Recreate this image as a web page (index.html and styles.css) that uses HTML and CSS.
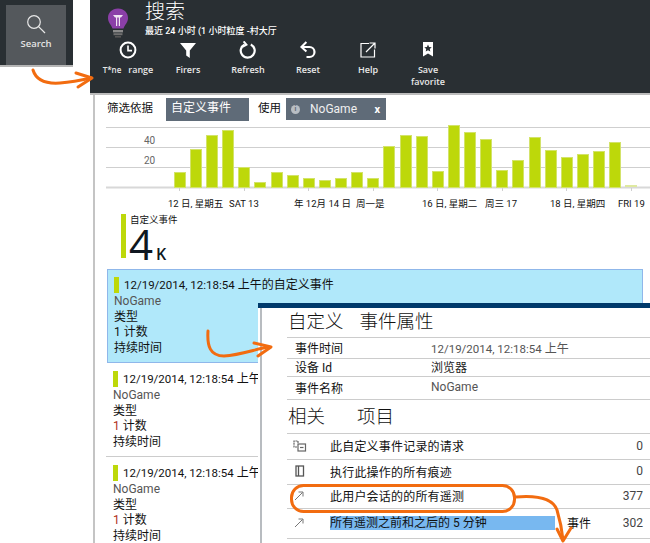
FILE: index.html
```html
<!DOCTYPE html>
<html lang="en">
  <head>
    <meta charset="UTF-8" />
    <meta name="viewport" content="width=device-width, initial-scale=1.0" />
    <title>搜索</title>
    <link rel="stylesheet" href="styles.css">
  </head>
  <body>
    <div class="page">
      <div class="side">
        <div class="search-tile">
          <svg width="20" height="20" viewBox="0 0 20 20" fill="none" stroke="#e8e8e8" stroke-width="1.2">
            <circle cx="8" cy="8" r="6.3" />
            <path d="M12.6 12.6 L19 19" />
          </svg>
          <span>Search</span>
        </div>
      </div>

      <div class="main">
        <header class="blade-header">
          <div class="blade-title">
            <svg class="bulb" width="22" height="30" viewBox="0 0 22 30">
              <path d="M11 0.5 C5 0.5 1 4.8 1 10 C1 14.5 4 16.5 5.5 20.5 L16.5 20.5 C18 16.5 21 14.5 21 10 C21 4.8 17 0.5 11 0.5 Z" fill="#8b3fa8" />
              <path d="M6 7 H16 L14 9.5 H13 V18 H11.8 V9.5 H10.2 V18 H9 V9.5 H8 Z" fill="#f0e4f3" />
              <rect x="6" y="22" width="10" height="2.4" fill="#8a8a8a" />
              <rect x="6.5" y="25.2" width="9" height="2" fill="#6f6f6f" />
              <rect x="8" y="28" width="6" height="1.6" fill="#555" />
            </svg>
            <div>
              <h1>搜索</h1>
              <p>最近 24 小时 (1 小时粒度 -村大厅</p>
            </div>
          </div>
          <div class="toolbar">
            <div class="tool">
              <svg width="18" height="18" viewBox="0 0 18 18" fill="none" stroke="#fff" stroke-width="2">
                <circle cx="9" cy="9" r="7.4" />
                <path d="M9 4.5 V9.6 H13" stroke-width="1.6" />
              </svg>
              <span><small>T*ne</small>&nbsp;&nbsp;&nbsp;range</span>
            </div>
            <div class="tool">
              <svg width="18" height="18" viewBox="0 0 18 18" fill="#fff">
                <path d="M1 2 H17 L10.8 9.5 V17 L7.2 14.5 V9.5 Z" />
              </svg>
              <span>Firers</span>
            </div>
            <div class="tool">
              <svg width="18" height="18" viewBox="0 0 18 18" fill="none" stroke="#fff" stroke-width="2.2">
                <path d="M11.8 3.4 A7 7 0 1 1 5.6 3.4" />
                <path d="M4.6 0.4 L7.4 3.6 L3.4 5.8" stroke-width="2" />
              </svg>
              <span>Refresh</span>
            </div>
            <div class="tool">
              <svg width="18" height="18" viewBox="0 0 18 18" fill="none" stroke="#fff" stroke-width="2.2">
                <path d="M3.5 6 H10.5 A5 5 0 0 1 10.5 16 H7.5" />
                <path d="M7.4 1 L2.4 6 L7.4 10.6" stroke-width="2" />
              </svg>
              <span>Reset</span>
            </div>
            <div class="tool">
              <svg width="18" height="18" viewBox="0 0 18 18" fill="none" stroke="#fff" stroke-width="1.2">
                <path d="M10 2.5 H2 V16 H15.5 V8.5" />
                <path d="M7 11 L15.5 2.5 M10.5 2 H16 V7.5" />
              </svg>
              <span>Help</span>
            </div>
            <div class="tool">
              <svg width="18" height="18" viewBox="0 0 18 18">
                <path d="M4 1 H14 V15.5 L9 12.5 L4 15.5 Z" fill="#fff" />
                <path d="M9 3.5 L10.1 6 L12.7 6.3 L10.8 8 L11.3 10.6 L9 9.3 L6.7 10.6 L7.2 8 L5.3 6.3 L7.9 6 Z" fill="#292f33" />
              </svg>
              <span>Save<br />favorite</span>
            </div>
          </div>
        </header>

        <div class="content">
          <div class="filters">
            <span class="filter-label">筛选依据</span>
            <span class="filter-select">自定义事件</span>
            <span class="filter-label">使用</span>
            <span class="filter-chip">
              <i class="chip-info">i</i>
              <span class="chip-name">NoGame</span>
              <b class="chip-close">x</b>
            </span>
          </div>

          <svg class="chart" width="555" height="88" viewBox="95 122 555 88">
            <g stroke="#cfcfcf" stroke-width="1">
              <path d="M106 126.5 H650 M106 146.5 H650 M106 166.5 H650" />
              <path d="M106 186.5 H650" stroke="#d8d8d8" stroke-width="2" />
              <path d="M179.5 187 V190 M244.5 187 V190 M308.5 187 V190 M373.5 187 V190 M437.5 187 V190 M502.5 187 V190 M566.5 187 V190 M631.5 187 V190" />
            </g>
            <g fill="#bdd80a" stroke="#d3e36a" stroke-width="1">
              <rect x="174.5" y="171.5" width="11" height="15" />
              <rect x="190.5" y="148.5" width="11" height="38" />
              <rect x="206.5" y="134.5" width="11" height="52" />
              <rect x="222.5" y="129.5" width="11" height="57" />
              <rect x="238.5" y="166.5" width="11" height="20" />
              <rect x="254.5" y="181.5" width="11" height="5" />
              <rect x="271.5" y="171.5" width="11" height="15" />
              <rect x="287.5" y="174.5" width="11" height="12" />
              <rect x="303.5" y="177.5" width="11" height="9" />
              <rect x="319.5" y="179.5" width="11" height="7" />
              <rect x="335.5" y="177.5" width="11" height="9" />
              <rect x="351.5" y="171.5" width="11" height="15" />
              <rect x="367.5" y="177.5" width="11" height="9" />
              <rect x="383.5" y="145.5" width="11" height="41" />
              <rect x="400.5" y="134.5" width="11" height="52" />
              <rect x="416.5" y="135.5" width="11" height="51" />
              <rect x="432.5" y="170.5" width="11" height="16" />
              <rect x="448.5" y="124.5" width="11" height="62" />
              <rect x="464.5" y="131.5" width="11" height="55" />
              <rect x="480.5" y="138.5" width="11" height="48" />
              <rect x="496.5" y="169.5" width="11" height="17" />
              <rect x="512.5" y="159.5" width="11" height="27" />
              <rect x="529.5" y="136.5" width="11" height="50" />
              <rect x="545.5" y="149.5" width="11" height="37" />
              <rect x="561.5" y="156.5" width="11" height="30" />
              <rect x="577.5" y="153.5" width="11" height="33" />
              <rect x="593.5" y="150.5" width="11" height="36" />
              <rect x="609.5" y="141.5" width="11" height="45" />
            </g>
            <rect x="625" y="184" width="12" height="2" fill="#dfe9a0" />
            <g class="axis-y">
              <text x="144" y="143">40</text>
              <text x="144" y="163">20</text>
            </g>
            <g class="axis-x">
              <text x="168" y="206">12 日, 星期五</text>
              <text x="229" y="206">SAT 13</text>
              <text x="294" y="206">年 12月 14 日</text>
              <text x="356" y="206">周一是</text>
              <text x="422" y="206">16 日, 星期二</text>
              <text x="485" y="206">周三 17</text>
              <text x="550" y="206">18 日, 星期四</text>
              <text x="618" y="206">FRI 19</text>
            </g>
          </svg>

          <div class="metric">
            <div class="metric-label">自定义事件</div>
            <div class="metric-value">4<span>K</span></div>
          </div>

          <div class="event-list">
            <div class="event selected">
              <div class="event-head"><i></i><span><span class="stamp">12/19/2014, 12:18:54</span> 上午的自定义事件</span></div>
              <div class="event-name">NoGame</div>
              <div>类型</div>
              <div>1 计数</div>
              <div>持续时间</div>
            </div>
            <div class="event">
              <div class="event-head"><i></i><span><span class="stamp">12/19/2014, 12:18:54</span> 上午</span></div>
              <div class="event-name">NoGame</div>
              <div>类型</div>
              <div><em>1</em> 计数</div>
              <div>持续时间</div>
            </div>
            <div class="event">
              <div class="event-head"><i></i><span><span class="stamp">12/19/2014, 12:18:54</span> 上午</span></div>
              <div class="event-name">NoGame</div>
              <div>类型</div>
              <div><em>1</em> 计数</div>
              <div>持续时间</div>
            </div>
          </div>
        </div>
      </div>

      <section class="detail">
        <div class="detail-inner">
          <h2 class="detail-title"><span>自定义</span><span>事件属性</span></h2>
          <div class="props">
            <div class="prop"><span>事件时间</span><span class="prop-value"><span class="stamp">12/19/2014, 12:18:54</span> 上午</span></div>
            <div class="prop"><span>设备 Id</span><span class="prop-value dark">浏览器</span></div>
            <div class="prop"><span>事件名称</span><span class="prop-value">NoGame</span></div>
          </div>
          <h2 class="related-title"><span>相关</span><span>项目</span></h2>
          <div class="related">
            <div class="rel">
              <svg width="14" height="14" viewBox="0 0 14 14" fill="none" stroke="#666" stroke-width="1.2">
                <path d="M5 4 V2 H1 V8 H4" stroke-dasharray="2 0.6" />
                <rect x="5" y="5" width="7.5" height="7" />
                <path d="M7 8.5 H10.5" />
              </svg>
              <span class="rel-text">此自定义事件记录的请求</span>
              <span class="rel-count">0</span>
            </div>
            <div class="rel">
              <svg width="14" height="14" viewBox="0 0 14 14" fill="none" stroke="#555" stroke-width="1.3">
                <rect x="3" y="2" width="7.5" height="10" />
                <path d="M5.5 2 V12" />
              </svg>
              <span class="rel-text">执行此操作的所有痕迹</span>
              <span class="rel-count">0</span>
            </div>
            <div class="rel">
              <svg width="14" height="14" viewBox="0 0 14 14" fill="none" stroke="#777" stroke-width="1">
                <path d="M2 11 L9.5 3.5 M5.5 3 H10 V7.5" />
              </svg>
              <span class="rel-text">此用户会话的的所有遥测</span>
              <span class="rel-count">377</span>
            </div>
            <div class="rel">
              <svg width="14" height="14" viewBox="0 0 14 14" fill="none" stroke="#777" stroke-width="1">
                <path d="M2 11 L9.5 3.5 M5.5 3 H10 V7.5" />
              </svg>
              <span class="rel-text highlight">所有遥测之前和之后的 5 分钟</span>
              <span class="rel-suffix">事件</span>
              <span class="rel-count">302</span>
            </div>
          </div>
        </div>
      </section>

      <svg class="arrows" width="650" height="543" viewBox="0 0 650 543" fill="none" stroke="#f26c10" stroke-linecap="round" stroke-linejoin="round">
        <g stroke-width="3">
          <path d="M33 70 C36 80 46 84 60 83 C72 82 82 80 91 78" />
          <path d="M76 73 L92 78 L78 87" />
          <path d="M208 331 C207 346 210 356 224 356 C240 355 256 349 268 347" />
          <path d="M254 343 L271 347 L258 356" />
          <rect x="291.5" y="485.5" width="223" height="26" rx="12" />
          <path d="M516 497 C540 495 553 499 557 510 C560 520 562 530 563 540" />
          <path d="M557 529 L563 541 L571 528" />
        </g>
      </svg>
    </div>
  </body>
</html>
```

FILE: styles.css
```css
* {
  box-sizing: border-box;
}
body {
  margin: 0;
  background-color: #ffffff;
  color: #111111;
  font-family: Roboto, "Noto Sans CJK SC", sans-serif;
  font-size: 12px;
}
.page {
  position: relative;
  display: flex;
  width: 650px;
  height: 543px;
  overflow: hidden;
}
.side {
  width: 90px;
  flex-shrink: 0;
}
.search-tile {
  display: flex;
  flex-direction: column;
  align-items: center;
  width: 73px;
  height: 67px;
  padding: 5px 7px 0 6px;
  background-color: #292f33;
  border-bottom: 2px solid #b5b5b5;
  background-clip: padding-box;
  color: #e4e4e4;
  font-family: "Open Sans", sans-serif;
  font-size: 9.5px;
  font-weight: 600;
}
.search-tile svg {
  margin-top: 9px;
}
.search-tile span {
  margin-top: 3px;
}
.search-tile::before {
  content: "";
  position: absolute;
  top: 5px;
  left: 6px;
  width: 60px;
  height: 60px;
  background-color: #54585c;
}
.search-tile svg,
.search-tile span {
  position: relative;
}
.main {
  flex: 1;
  display: flex;
  flex-direction: column;
  min-width: 0;
}
.blade-header {
  height: 95px;
  padding: 8px 0 0 8px;
  background-color: #292f33;
  border-bottom: 2px solid #bcbcbc;
  color: #ffffff;
}
.blade-title {
  display: flex;
  height: 33px;
  padding-left: 9px;
}
.bulb {
  flex-shrink: 0;
  margin-right: 16px;
}
.blade-title h1 {
  margin: -8px 0 0;
  font-size: 20px;
  font-weight: 300;
  line-height: 24px;
}
.blade-title p {
  margin: 0;
  font-size: 9px;
  font-weight: 500;
  line-height: 14px;
  white-space: nowrap;
}
.toolbar {
  display: flex;
}
.tool {
  display: flex;
  flex-direction: column;
  align-items: center;
  width: 60px;
  color: #e8e8e8;
  font-family: "Open Sans", sans-serif;
  font-size: 9px;
  font-weight: 600;
  line-height: 12px;
  text-align: center;
}
.tool svg {
  margin-bottom: 5px;
}
.tool small {
  font-size: 8px;
}
.content {
  flex: 1;
  min-height: 0;
  margin-left: 3px;
  border-left: 2px solid #c4c4c4;
}
.filters {
  display: flex;
  align-items: flex-start;
  height: 24px;
  margin-top: 3px;
  padding-left: 12px;
}
.filter-label {
  font-size: 11.5px;
  line-height: 20px;
  white-space: nowrap;
}
.filter-select {
  width: 83px;
  height: 23px;
  margin: 0 9px 0 13px;
  padding-left: 5px;
  background-color: #5f6b78;
  color: #ffffff;
  line-height: 20px;
}
.filter-chip {
  display: flex;
  align-items: center;
  width: 100px;
  height: 22px;
  margin-left: 5px;
  padding-left: 5px;
  background-color: #5f6b78;
  color: #f0f0f0;
}
.chip-info {
  width: 9px;
  height: 9px;
  border-radius: 50%;
  background-color: #b9bec4;
  color: #5f6b78;
  font-size: 7px;
  font-style: normal;
  font-weight: 700;
  line-height: 9px;
  text-align: center;
}
.chip-name {
  margin-left: 10px;
}
.chip-close {
  margin-left: auto;
  margin-right: 6px;
  color: #ffffff;
  font-size: 11px;
}
.chart {
  display: block;
  margin-top: 1px;
}
.axis-y {
  fill: #666666;
  font-size: 10px;
}
.axis-x {
  fill: #111111;
  font-size: 9.5px;
}
.metric {
  height: 44px;
  margin: 3px 0 0 26px;
  padding-left: 4px;
  border-left: 5px solid #bdd80a;
}
.metric-label {
  font-size: 9.5px;
  line-height: 12px;
}
.metric-value {
  margin-top: 1px;
  margin-left: -1px;
  color: #0f1720;
  font-family: "Open Sans", sans-serif;
  font-size: 42px;
  font-weight: 500;
  line-height: 33px;
}
.metric-value span {
  margin-left: 3px;
  font-size: 16px;
  font-weight: 600;
}
.event-list {
  width: 537px;
  margin: 11px 0 0 11px;
}
.event {
  height: 94px;
  padding: 8px 0 8px 7px;
  border-bottom: 1px solid #cccccc;
  line-height: 15.5px;
  white-space: nowrap;
}
.event.selected {
  margin-left: 1px;
  padding: 7px 0 7px 6px;
  background-color: #b0e8fa;
  border: 1px solid #8fb7ea;
}
.event-head {
  display: flex;
  align-items: center;
  height: 16px;
}
.event-head i {
  width: 5px;
  height: 16px;
  margin-right: 5px;
  background-color: #bdd80a;
}
.event-head > span {
  padding-top: 2px;
}
.stamp {
  font-size: 11.5px;
}
.event-name {
  margin-top: 1px;
  color: #555555;
}
.event em {
  color: #b03020;
  font-style: normal;
}
.detail {
  position: absolute;
  top: 303px;
  left: 258px;
  width: 392px;
  height: 240px;
  padding-left: 2px;
  background-color: #ffffff;
  border-top: 5px solid #003a6b;
}
.detail-inner {
  height: 100%;
  padding-left: 25px;
  border-left: 2px solid #b8bcc0;
}
.detail-title,
.related-title {
  display: flex;
  margin: 0;
  font-size: 18.5px;
  font-weight: 300;
}
.detail-title {
  gap: 16px;
  height: 29px;
  padding-left: 1px;
  line-height: 29px;
}
.props {
  display: grid;
  grid-template-rows: 21px 18px 23px;
}
.prop,
.rel {
  display: flex;
  align-items: center;
  padding-bottom: 2px;
  border-top: 1px solid #cccccc;
}
.prop {
  padding-left: 8px;
}
.prop > span:first-child {
  width: 136px;
}
.prop-value {
  color: #555555;
}
.prop-value.dark {
  color: #222222;
}
.related-title {
  gap: 32px;
  height: 34px;
  padding-left: 1px;
  border-top: 1px solid #cccccc;
  line-height: 35px;
}
.related {
  display: grid;
  grid-template-rows: 26px 25px 24px 30px;
  border-bottom: 1px solid #cccccc;
}
.rel {
  padding-right: 7px;
  padding-left: 6px;
}
.rel svg {
  flex-shrink: 0;
  margin-right: 23px;
}
.rel-text {
  letter-spacing: 0.2px;
  white-space: nowrap;
}
.rel-text.highlight {
  width: 225px;
  background-color: #78b8f0;
  letter-spacing: 0;
  line-height: 14px;
}
.rel-suffix {
  margin-left: 12px;
}
.rel-count {
  margin-left: auto;
  color: #444444;
}
.arrows {
  position: absolute;
  top: 0;
  left: 0;
  pointer-events: none;
}
```
